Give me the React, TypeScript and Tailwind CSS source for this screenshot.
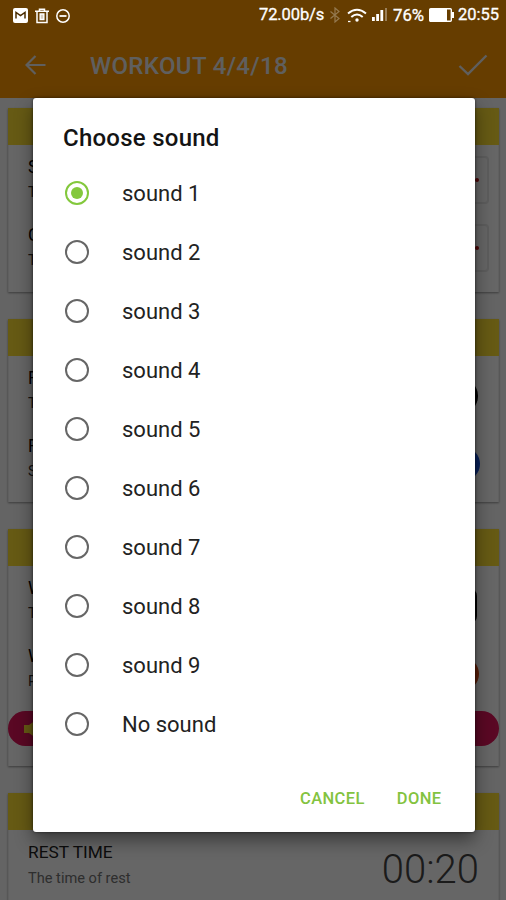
import React from 'react';
import clsx from 'clsx';

const sounds = ['sound 1', 'sound 2', 'sound 3', 'sound 4', 'sound 5', 'sound 6', 'sound 7', 'sound 8', 'sound 9', 'No sound'];

const StatusBar: React.FC = () => (
  <div className="absolute inset-x-0 top-0 z-20 flex h-[31px] items-center pl-[13px] pr-[7px] text-white">
    <div className="flex items-center gap-[7px]">
      <svg width="15" height="15" viewBox="0 0 15 15">
        <rect width="15" height="15" rx="2" fill="#fff" />
        <path d="M3 10.500V4.500l4.500 3.200L12 4.500v6" fill="none" stroke="#4a2c00" strokeWidth="1.500" />
      </svg>
      <svg width="14" height="16" viewBox="0 0 14 16" fill="none" stroke="#fff" strokeWidth="1.500">
        <path d="M0 3.200h14M4.500 3V1.200h5V3M2 3.500V14.500h10V3.500M5.200 6v5.500h3.600V6zM7 6v5.500" />
      </svg>
      <svg width="14" height="14" viewBox="0 0 14 14" fill="none" stroke="#fff" strokeWidth="1.500">
        <circle cx="7" cy="7" r="6.200" />
        <path d="M3.500 7h7" strokeWidth="1.800" />
      </svg>
    </div>
    <div className="ml-auto flex items-center">
      <span className="w-16 text-[16.500px] leading-none tracking-[-0.100px] [-webkit-text-stroke:0.3px_white]">72.00b/s</span>
      <svg className="ml-[7px]" width="10" height="16" viewBox="0 0 10 16" fill="none" stroke="#94794f" strokeWidth="1.200">
        <path d="M0.500 4.500l8.500 7-4 3.500V1l4 3.500-8.500 7" />
      </svg>
      <svg className="ml-[7px]" width="20" height="15" viewBox="0 0 20 15" fill="none" stroke="#fff" strokeWidth="2">
        <path d="M1 5.500Q10 -2 19 5.500M4.300 9Q10 4 15.700 9" />
        <circle cx="10" cy="12" r="1.700" fill="#fff" stroke="none" />
        <path d="M1 13.500h2.500" strokeWidth="1.300" />
      </svg>
      <svg className="ml-[5px]" width="17" height="14" viewBox="0 0 17 14" fill="#fff">
        <rect x="0" y="9" width="2.800" height="4" />
        <rect x="4.200" y="6" width="2.800" height="7" />
        <rect x="8.400" y="2" width="2.800" height="11" />
        <rect x="13" y="0" width="2" height="13" opacity=".35" />
      </svg>
      <span className="ml-[4px] w-[33px] text-[16.800px] leading-none [-webkit-text-stroke:0.3px_white]">76%</span>
      <svg className="ml-[3px]" width="25" height="14" viewBox="0 0 25 14">
        <rect x=".7" y=".7" width="21.600" height="12.600" rx="1" fill="none" stroke="#fff" strokeWidth="1.400" />
        <rect x="1" y="1" width="17" height="12" fill="#fff" />
        <rect x="23" y="4" width="2" height="6" fill="#fff" />
      </svg>
      <span className="ml-[4px] w-[41px] text-[16.500px] leading-none [-webkit-text-stroke:0.3px_white]">20:55</span>
    </div>
  </div>
);

type CardProps = { className?: string; children: React.ReactNode };

const Card: React.FC<CardProps> = ({ className, children }) => (
  <section className={clsx('shrink-0 border-x border-[#f0f0f0] bg-white shadow-[0_1px_2px_rgba(0,0,0,0.4)]', className)}>
    <div className="-mx-px h-[37px] bg-[#ffe032]" />
    {children}
  </section>
);

type RowProps = { title: string; text: string; className?: string; children?: React.ReactNode };

const Row: React.FC<RowProps> = ({ title, text, className, children }) => (
  <div className={clsx('flex h-[68px] justify-between pl-[19px]', className)}>
    <div className="pt-2.5">
      <p className="text-[17.500px] leading-6 text-black">{title}</p>
      <p className="text-[14.500px] leading-[27px] text-[#333]">{text}</p>
    </div>
    {children}
  </div>
);

const Picker: React.FC = () => (
  <div className="mr-[9px] mt-[11px] flex h-12 w-28 items-center justify-end rounded-sm border-2 border-[#e8e8e8] pr-2">
    <span className="h-1 w-1 rounded-full bg-[#c01010]" />
  </div>
);

const App: React.FC = () => {
  const [selected, setSelected] = React.useState(0);

  return (
    <div className="relative h-[900px] w-full overflow-hidden bg-[#fafafa] font-[Roboto,sans-serif]">
      <StatusBar />

      <header className="flex h-[98px] items-center bg-[#ff9800] pl-[25px] pr-[18px] pt-8 text-[#ededed]">
        <svg width="21" height="20" viewBox="0 0 21 20" fill="none" stroke="currentColor" strokeWidth="2.200">
          <path d="M20.500 10H2M10.500 1L1.500 10l9 9" />
        </svg>
        <h1 className="ml-[44px] pt-px text-2xl font-medium tracking-[0.350px]">WORKOUT 4/4/18</h1>
        <svg className="ml-auto" width="30" height="22" viewBox="0 0 30 22" fill="none" stroke="currentColor" strokeWidth="2.400">
          <path d="M1.500 12l8.500 8L28.500 1.500" />
        </svg>
      </header>

      <main className="flex flex-col gap-[27px] pl-2 pr-[7px] pt-[10px]">
        <Card className="h-[184px]">
          <Row title="Sound" text="The sound"><Picker /></Row>
          <Row title="Countdown" text="The sound"><Picker /></Row>
        </Card>

        <Card className="h-[183px]">
          <Row title="Rounds" text="The rounds">
            <span className="mr-[20px] mt-[22px] h-9 w-9 rounded-full bg-black" />
          </Row>
          <Row title="Rest color" text="Select color">
            <span className="mr-[18px] mt-[23px] h-[34px] w-[34px] rounded-full bg-[#1550e0]" />
          </Row>
        </Card>

        <Card className="h-[237px]">
          <Row title="Work" text="The time">
            <span className="mr-[21px] mt-[22px] h-9 w-9 rounded-lg bg-black" />
          </Row>
          <Row title="Work color" text="Pick color" className="h-[77px]">
            <span className="mr-[19px] mt-[23px] h-[34px] w-[34px] rounded-full bg-[#e04a10]" />
          </Row>
          <div className="-mx-px flex h-[35px] items-center rounded-full bg-[#e0145a] pl-4">
            <svg width="18" height="18" viewBox="0 0 18 18" fill="#ffe032">
              <path d="M0 5h5l7-5v18l-7-5H0z" />
            </svg>
          </div>
        </Card>

        <Card className="h-[140px]">
          <div className="flex justify-between pl-[19px] pr-[19px]">
            <div className="pt-[10px]">
              <p className="text-[17.300px] leading-6 text-[#222]">REST TIME</p>
              <p className="text-[14.600px] leading-7 text-[#737373]">The time of rest</p>
            </div>
            <p className="pt-[16px] text-[40px] font-light leading-[48px] text-[#444]">00:20</p>
          </div>
        </Card>
      </main>

      {/* Dialog */}
      <div className="absolute inset-0 z-10 bg-black/60 pl-[33px] pr-[31px] pt-[98px]">
        <div role="dialog" className="flex h-[734px] flex-col rounded-[3px] bg-white shadow-[0_8px_18px_rgba(0,0,0,0.45),0_0_3px_rgba(0,0,0,0.6)]">
          <h2 className="px-[30px] pb-[9px] pt-6 text-2xl font-medium leading-8 tracking-[0.250px] text-[#141414]">Choose sound</h2>
          <div className="flex flex-col">
            {sounds.map((sound, i) => (
              <button key={sound} onClick={() => setSelected(i)} className="flex h-[59.100px] items-center pl-8 text-left">
                <span className={clsx('flex h-6 w-6 items-center justify-center rounded-full border-2', selected === i ? 'border-[#83c83c]' : 'border-[#666]')}>
                  {selected === i && <span className="h-3 w-3 rounded-full bg-[#83c83c]" />}
                </span>
                <span className="ml-[33px] pt-px text-[22px] text-[#222]">{sound}</span>
              </button>
            ))}
          </div>
          <div className="flex gap-8 pl-[267px] pt-[33px] text-[16.500px] font-medium leading-6 tracking-[0.400px] text-[#83c340]">
            <button>CANCEL</button>
            <button>DONE</button>
          </div>
        </div>
      </div>
    </div>
  );
};

export default App;
